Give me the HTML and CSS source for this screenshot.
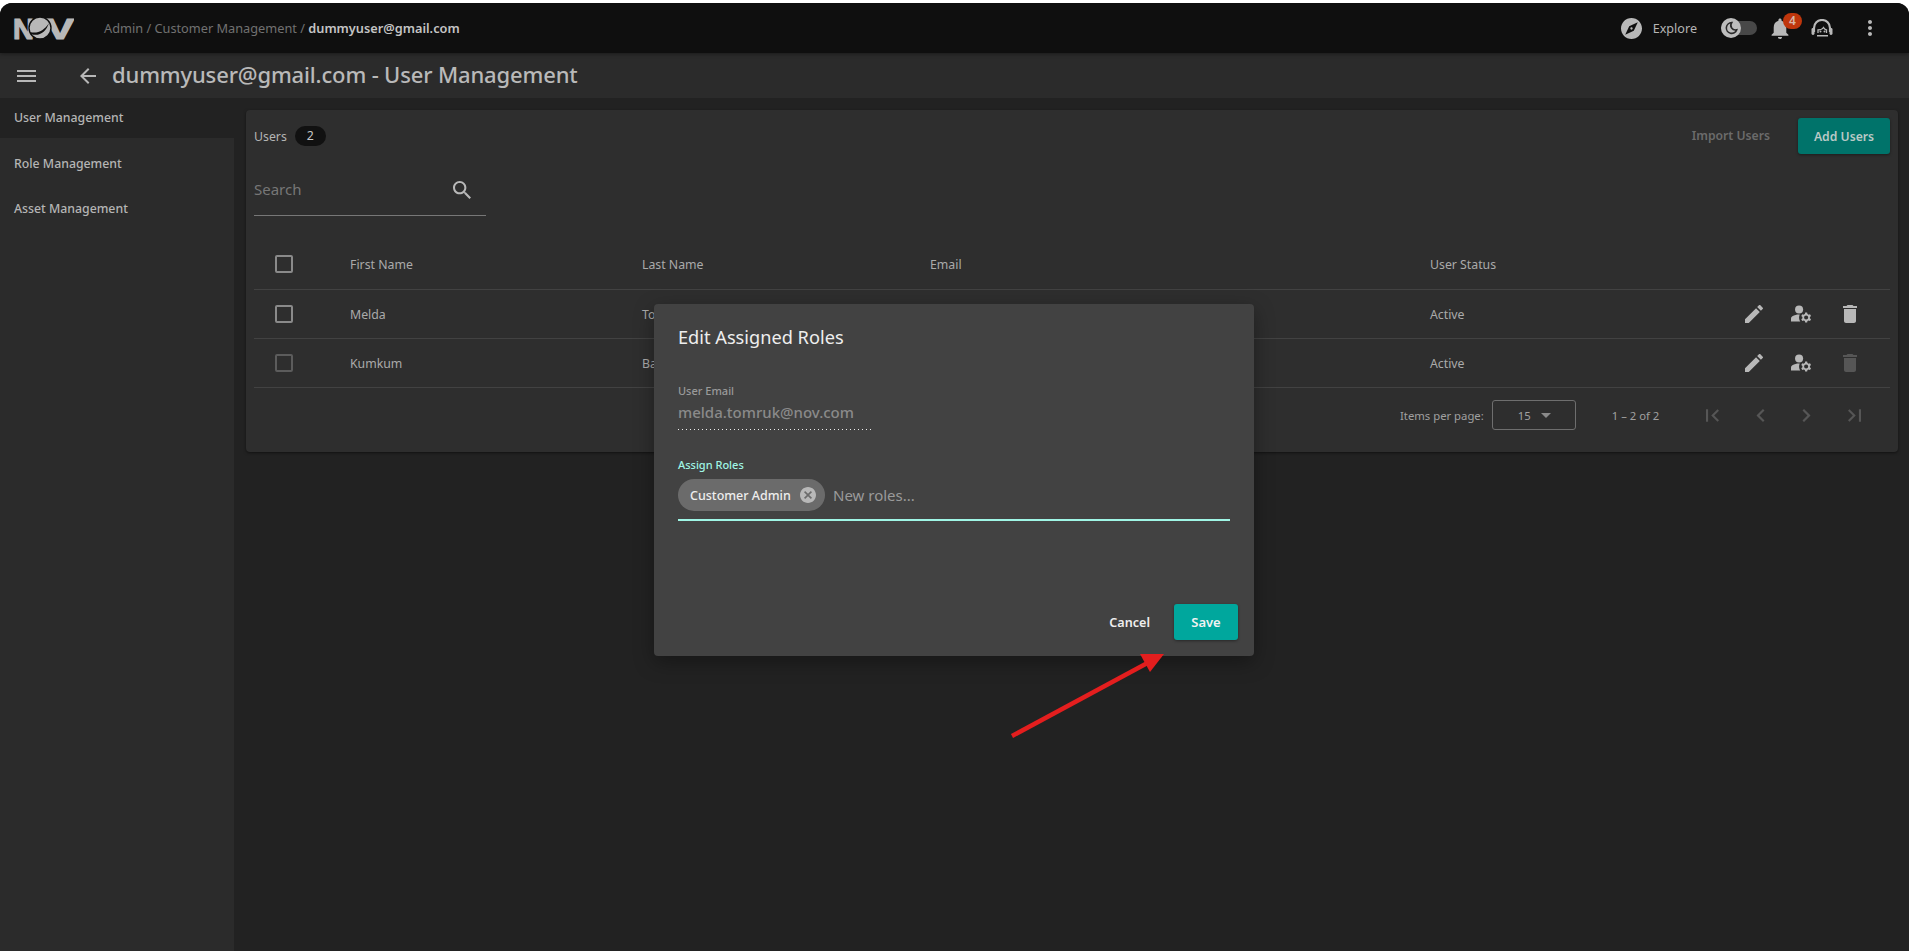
FILE: index.html
```html
<!DOCTYPE html>
<html lang="en">
<head>
  <meta charset="UTF-8" />
  <meta name="viewport" content="width=device-width, initial-scale=1.0"/>
  <title>User Management</title>
  <link rel="stylesheet" href="styles.css">
</head>
<body>
  <div class="app">
    <!-- Top bar -->
    <header class="topbar">
      <svg class="logo" viewBox="0 0 61 36">
        <text class="logo-letter" x="0" y="28.5" textLength="21" lengthAdjust="spacingAndGlyphs">N</text>
        <text class="logo-letter" x="33" y="28.5" textLength="28" lengthAdjust="spacingAndGlyphs">V</text>
        <circle cx="27" cy="18" r="11" fill="#b8b8b8" stroke="#0f0f0f" stroke-width="1.4"/>
        <path d="M17 22c7 2 14-1 19-9-3 9-10 14-18 11z" fill="#0f0f0f"/>
      </svg>
      <div class="crumbs">Admin / Customer Management / <strong>dummyuser@gmail.com</strong></div>
      <div class="top-actions">
        <svg class="ico explore-ico" viewBox="2 2 20 20"><path d="M12 10.9c-.61 0-1.1.49-1.1 1.1s.49 1.1 1.1 1.1c.61 0 1.1-.49 1.1-1.1s-.49-1.1-1.1-1.1zM12 2C6.48 2 2 6.48 2 12s4.48 10 10 10 10-4.48 10-10S17.52 2 12 2zm2.19 12.19L6 18l3.81-8.19L18 6l-3.81 8.19z"/></svg>
        <span class="explore">Explore</span>
        <div class="toggle">
          <div class="knob">
            <svg viewBox="0 0 24 24"><path d="M13 4a8 8 0 1 0 7.5 10.8A7 7 0 0 1 13 4z" fill="none" stroke="#2b2b2b" stroke-width="2.4"/></svg>
          </div>
        </div>
        <div class="bell">
          <svg class="ico" viewBox="4 2 16 20"><path d="M12 22c1.1 0 2-.9 2-2h-4c0 1.1.89 2 2 2zm6-6v-5c0-3.07-1.64-5.64-4.5-6.32V4c0-.83-.67-1.5-1.5-1.5s-1.5.67-1.5 1.5v.68C7.63 5.36 6 7.92 6 11v5l-2 2v1h16v-1l-2-2z"/></svg>
          <span class="bell-count">4</span>
        </div>
        <svg class="support" viewBox="0 0 22 18" fill="none" stroke="#b8b8b8">
          <path d="M3 13V9a8 8 0 0 1 16 0v4" stroke-width="2.2"/>
          <path d="M7 14V11c2.5 0 4.5-1 5.5-2.5 1 1.5 1.5 2.5 3 2.5v3" stroke-width="1.3"/>
          <path d="M6 16.8h11" stroke-width="1.6"/>
          <circle cx="9.5" cy="12.5" r="1" fill="#b8b8b8" stroke="none"/>
          <circle cx="13.5" cy="12.5" r="1" fill="#b8b8b8" stroke="none"/>
          <rect x="0.5" y="9" width="3" height="7" rx="1.4" fill="#b8b8b8" stroke="none"/>
          <rect x="18.5" y="9" width="3" height="7" rx="1.4" fill="#b8b8b8" stroke="none"/>
        </svg>
        <svg class="ico kebab" viewBox="0 0 24 24"><path d="M12 8c1.1 0 2-.9 2-2s-.9-2-2-2-2 .9-2 2 .9 2 2 2zm0 2c-1.1 0-2 .9-2 2s.9 2 2 2 2-.9 2-2-.9-2-2-2zm0 6c-1.1 0-2 .9-2 2s.9 2 2 2 2-.9 2-2-.9-2-2-2z"/></svg>
      </div>
    </header>

    <!-- Page title -->
    <div class="titlebar">
      <svg class="ico menu-ico" viewBox="3 6 18 12" preserveAspectRatio="none"><path d="M3 18h18v-2H3v2zm0-5h18v-2H3v2zm0-7v2h18V6H3z"/></svg>
      <svg class="ico back-ico" viewBox="4 4 16 16"><path d="M20 11H7.83l5.59-5.59L12 4l-8 8 8 8 1.41-1.41L7.83 13H20v-2z"/></svg>
      <h1>dummyuser@gmail.com - User Management</h1>
    </div>

    <div class="body-row">
      <nav class="sidebar">
        <a class="nav-item active">User Management</a>
        <a class="nav-item">Role Management</a>
        <a class="nav-item">Asset Management</a>
      </nav>

      <main class="content">
        <section class="card">
          <div class="card-head">
            <span class="users-label">Users</span>
            <span class="count">2</span>
            <span class="import">Import Users</span>
            <button class="btn-add">Add Users</button>
          </div>

          <div class="search">
            <span>Search</span>
            <svg class="ico" viewBox="3 3 17.5 17.5"><path d="M15.5 14h-.79l-.28-.27C15.41 12.59 16 11.11 16 9.5 16 5.91 13.09 3 9.5 3S3 5.91 3 9.5 5.91 16 9.5 16c1.61 0 3.09-.59 4.23-1.57l.27.28v.79l5 4.99L20.49 19l-4.99-5zm-6 0C7.01 14 5 11.99 5 9.5S7.01 5 9.5 5 14 7.01 14 9.5 11.99 14 9.5 14z"/></svg>
          </div>

          <div class="row row-head">
            <span class="check"></span>
            <span>First Name</span>
            <span>Last Name</span>
            <span>Email</span>
            <span>User Status</span>
            <span></span>
          </div>
          <div class="row">
            <span class="check"></span>
            <span>Melda</span>
            <span>Tomruk</span>
            <span>melda.tomruk@nov.com</span>
            <span>Active</span>
            <span class="row-actions">
              <svg class="ico act-edit" viewBox="3 3 18 18"><path d="M3 17.25V21h3.75L17.81 9.94l-3.75-3.75L3 17.25zM20.71 7.04c.39-.39.39-1.02 0-1.41l-2.34-2.34c-.39-.39-1.02-.39-1.41 0l-1.83 1.83 3.75 3.75 1.83-1.83z"/></svg>
              <svg class="ico act-user" viewBox="2 4 20.8 17"><circle cx="10" cy="8" r="4"/><path d="M10.67 13.02C10.45 13.01 10.23 13 10 13c-2.42 0-4.68.67-6.61 1.82C2.51 15.34 2 16.32 2 17.35V20h9.26c-.79-1.13-1.26-2.51-1.26-4 0-1.07.25-2.07.67-2.98z"/><path d="M20.75 16c0-.22-.03-.42-.06-.63l1.14-1.01-1-1.73-1.45.49c-.32-.27-.68-.48-1.08-.63L18 11h-2l-.3 1.49c-.4.15-.76.36-1.08.63l-1.45-.49-1 1.73 1.14 1.01c-.03.21-.06.41-.06.63s.03.42.06.63l-1.14 1.01 1 1.73 1.45-.49c.32.27.68.48 1.08.63L16 21h2l.3-1.49c.4-.15.76-.36 1.08-.63l1.45.49 1-1.73-1.14-1.01c.03-.21.06-.41.06-.63zM17 18c-1.1 0-2-.9-2-2s.9-2 2-2 2 .9 2 2-.9 2-2 2z"/></svg>
              <svg class="ico act-trash" viewBox="5 3 14 18"><path d="M6 19c0 1.1.9 2 2 2h8c1.1 0 2-.9 2-2V7H6v12zM19 4h-3.5l-1-1h-5l-1 1H5v2h14V4z"/></svg>
            </span>
          </div>
          <div class="row">
            <span class="check dim"></span>
            <span>Kumkum</span>
            <span>Bansal</span>
            <span>kumkum.bansal@nov.com</span>
            <span>Active</span>
            <span class="row-actions">
              <svg class="ico act-edit" viewBox="3 3 18 18"><path d="M3 17.25V21h3.75L17.81 9.94l-3.75-3.75L3 17.25zM20.71 7.04c.39-.39.39-1.02 0-1.41l-2.34-2.34c-.39-.39-1.02-.39-1.41 0l-1.83 1.83 3.75 3.75 1.83-1.83z"/></svg>
              <svg class="ico act-user" viewBox="2 4 20.8 17"><circle cx="10" cy="8" r="4"/><path d="M10.67 13.02C10.45 13.01 10.23 13 10 13c-2.42 0-4.68.67-6.61 1.82C2.51 15.34 2 16.32 2 17.35V20h9.26c-.79-1.13-1.26-2.51-1.26-4 0-1.07.25-2.07.67-2.98z"/><path d="M20.75 16c0-.22-.03-.42-.06-.63l1.14-1.01-1-1.73-1.45.49c-.32-.27-.68-.48-1.08-.63L18 11h-2l-.3 1.49c-.4.15-.76.36-1.08.63l-1.45-.49-1 1.73 1.14 1.01c-.03.21-.06.41-.06.63s.03.42.06.63l-1.14 1.01 1 1.73 1.45-.49c.32.27.68.48 1.08.63L16 21h2l.3-1.49c.4-.15.76-.36 1.08-.63l1.45.49 1-1.73-1.14-1.01c.03-.21.06-.41.06-.63zM17 18c-1.1 0-2-.9-2-2s.9-2 2-2 2 .9 2 2-.9 2-2 2z"/></svg>
              <svg class="ico act-trash ico-off" viewBox="5 3 14 18"><path d="M6 19c0 1.1.9 2 2 2h8c1.1 0 2-.9 2-2V7H6v12zM19 4h-3.5l-1-1h-5l-1 1H5v2h14V4z"/></svg>
            </span>
          </div>

          <div class="pager">
            <span class="per-page">Items per page:</span>
            <div class="page-select"><span>15</span><i class="caret"></i></div>
            <span class="range">1 – 2 of 2</span>
            <div class="pager-btns">
              <svg class="ico pg-wide" viewBox="6 6 12.41 12"><path d="M18.41 16.59L13.82 12l4.59-4.59L17 6l-6 6 6 6zM6 6h2v12H6z"/></svg>
              <svg class="ico pg-thin" viewBox="8 6 7.41 12"><path d="M15.41 7.41L14 6l-6 6 6 6 1.41-1.41L10.83 12z"/></svg>
              <svg class="ico pg-thin" viewBox="8.59 6 7.41 12"><path d="M10 6L8.59 7.41 13.17 12l-4.58 4.58L10 18l6-6z"/></svg>
              <svg class="ico pg-wide" viewBox="5.59 6 12.41 12"><path d="M5.59 7.41L10.18 12l-4.59 4.59L7 18l6-6-6-6zM16 6h2v12h-2z"/></svg>
            </div>
          </div>
        </section>
      </main>
    </div>

    <!-- Dialog -->
    <div class="dialog">
      <h2>Edit Assigned Roles</h2>
      <label class="field-label">User Email</label>
      <div class="readonly">melda.tomruk@nov.com</div>
      <label class="field-label focus">Assign Roles</label>
      <div class="chips">
        <span class="chip">Customer Admin
          <svg viewBox="2 2 20 20"><path d="M12 2C6.47 2 2 6.47 2 12s4.47 10 10 10 10-4.47 10-10S17.53 2 12 2zm5 13.59L15.59 17 12 13.41 8.41 17 7 15.59 10.59 12 7 8.41 8.41 7 12 10.59 15.59 7 17 8.41 13.41 12 17 15.59z"/></svg>
        </span>
        <span class="placeholder">New roles...</span>
      </div>
      <div class="dialog-actions">
        <button class="btn-cancel">Cancel</button>
        <button class="btn-save">Save</button>
      </div>
    </div>

    <!-- Annotation arrow -->
    <svg class="arrow" viewBox="0 0 170 100">
      <path d="M4 84L145 8" stroke="#e41e1e" stroke-width="4.5"/>
      <path d="M156 2L132 2L142 20z" fill="#e41e1e"/>
    </svg>
  </div>
</body>
</html>
```

FILE: styles.css
```css
* { box-sizing: border-box; margin: 0; padding: 0; }

body {
  background: #fff;
  font-family: "Noto Sans", "Open Sans", sans-serif;
  font-size: 12.3px;
  color: #b5b5b5;
  height: 951px;
  overflow: hidden;
  padding-top: 3px;
}

.app {
  position: relative;
  height: 948px;
  display: flex;
  flex-direction: column;
  background: #222;
  border-radius: 12px 12px 0 0;
  overflow: hidden;
}

.ico { fill: #b8b8b8; display: block; }

/* top bar */
.topbar {
  height: 50px;
  flex: none;
  display: flex;
  align-items: center;
  background: #0f0f0f;
  padding-left: 13px;
  box-shadow: 0 1px 4px rgba(0, 0, 0, 0.4);
  position: relative;
  z-index: 1;
}

.logo { width: 61px; height: 36px; }
.logo-letter {
  font-family: "Liberation Sans", sans-serif;
  font-weight: 700;
  font-size: 29px;
  fill: #b8b8b8;
  stroke: #b8b8b8;
  stroke-width: 1.2px;
}

.crumbs { margin-left: 30px; color: #717171; font-size: 12.75px; }
.crumbs strong { color: #c4c4c4; font-weight: 600; }

.top-actions {
  margin-left: auto;
  display: flex;
  align-items: center;
  padding-right: 27px;
  font-size: 12.6px;
}

.explore-ico { width: 21px; height: 21px; }
.explore { margin-left: 11px; color: #b5b5b5; }

.toggle {
  margin-left: 24px;
  width: 36px;
  height: 14px;
  border-radius: 7px;
  background: #484848;
  display: flex;
  align-items: center;
}
.knob {
  width: 20px;
  height: 20px;
  border-radius: 50%;
  background: #bdbdbd;
  padding: 2px;
}
.knob svg { display: block; }

.bell { position: relative; margin-left: 14px; }
.bell .ico { width: 18px; height: 21px; }
.bell-count {
  position: absolute;
  top: -5px;
  left: 12px;
  width: 19px;
  height: 16px;
  border-radius: 8px;
  background: #bf360c;
  color: #d9b5a8;
  font-size: 12px;
  font-weight: 600;
  line-height: 16px;
  text-align: center;
}

.support { margin-left: 22px; width: 22px; height: 18px; }
.kebab { margin-left: 25px; width: 24px; height: 24px; }

/* title bar */
.titlebar {
  height: 45px;
  flex: none;
  display: flex;
  align-items: center;
  background: #2b2b2b;
  padding-left: 17px;
}
.menu-ico { width: 19px; height: 12px; }
.back-ico { margin-left: 44px; width: 16px; height: 16px; }
.titlebar h1 {
  margin-left: 16px;
  margin-bottom: 3px;
  font-size: 22px;
  font-weight: 500;
  letter-spacing: -0.15px;
  color: #b9b9b9;
}

/* sidebar */
.body-row { flex: 1; display: flex; min-height: 0; }

.sidebar {
  width: 234px;
  flex: none;
  background: #2b2b2b;
}
.nav-item {
  display: flex;
  align-items: center;
  height: 45px;
  padding: 0 14px 4px;
  color: #b5b5b5;
  font-size: 12.3px;
  font-weight: 500;
}
.nav-item.active { height: 40px; background: #222; margin-bottom: 5px; padding-bottom: 1px; }

/* card */
.content { flex: 1; padding: 12px 11px 0 12px; }

.card {
  height: 342px;
  background: #2e2e2e;
  border-radius: 4px;
  box-shadow: 0 1px 3px rgba(0, 0, 0, 0.5);
  padding: 8px 8px 0;
}

.card-head {
  display: flex;
  align-items: center;
  height: 36px;
}
.users-label { color: #b5b5b5; }
.count {
  margin-left: 8px;
  width: 31px;
  height: 20px;
  border-radius: 10px;
  background: #111;
  color: #c8c8c8;
  line-height: 20px;
  text-align: center;
}
.import { margin-left: auto; margin-bottom: 2px; color: #6b6b6b; font-size: 12.2px; font-weight: 600; }
.btn-add {
  margin-left: 28px;
  width: 92px;
  height: 36px;
  border: none;
  border-radius: 3px;
  background: #00736a;
  color: #b9c9c6;
  font: 600 12.2px "Noto Sans", sans-serif;
  box-shadow: 0 1px 3px rgba(0, 0, 0, 0.4);
}

.search {
  margin: 18px 0 0;
  width: 232px;
  height: 44px;
  padding: 7px 15px 0 0;
  border-bottom: 1px solid #777;
  display: flex;
  justify-content: space-between;
  align-items: flex-start;
  color: #777;
  font-size: 15px;
}
.search .ico { width: 18px; height: 18px; margin-top: 2px; }

.row {
  display: grid;
  grid-template-columns: 75px 292px 288px 500px 1fr 145px;
  align-items: center;
  height: 49px;
  padding-left: 21px;
  border-bottom: 1px solid #424242;
  color: #aaa;
}
.row-head { margin-top: 25px; padding-bottom: 2px; }

.check {
  width: 18px;
  height: 18px;
  border: 2px solid #8a8a8a;
  border-radius: 2px;
}
.check.dim { border-color: #5c5c5c; }

.row-actions { display: flex; align-items: center; gap: 28px; }
.row-actions .ico { height: 18px; }
.row-actions .act-edit { width: 18px; }
.row-actions .act-user { width: 21px; }
.row-actions .act-trash { width: 16px; margin-left: 2px; }
.row-actions .ico-off { fill: #565656; }

.pager {
  display: flex;
  align-items: center;
  height: 54px;
  padding-left: 1146px;
  font-size: 11.3px;
  color: #a0a0a0;
}
.page-select {
  margin-left: 8px;
  width: 84px;
  height: 30px;
  border: 1px solid #6e6e6e;
  border-radius: 3px;
  padding-left: 25px;
  display: flex;
  align-items: center;
  gap: 10px;
}
.caret {
  border-left: 5px solid transparent;
  border-right: 5px solid transparent;
  border-top: 5px solid #8a8a8a;
}
.range { margin-left: 36px; }
.pager-btns { margin-left: 47px; display: flex; align-items: center; gap: 37px; }
.pager-btns .ico { height: 13px; fill: #565656; }
.pager-btns .pg-wide { width: 13px; }
.pager-btns .pg-thin { width: 9px; }

/* dialog */
.dialog {
  position: absolute;
  left: 654px;
  top: 301px;
  width: 600px;
  height: 352px;
  background: #424242;
  border-radius: 4px;
  box-shadow: 0 6px 20px rgba(0, 0, 0, 0.35);
  padding: 20px 24px;
  display: flex;
  flex-direction: column;
  align-items: flex-start;
}
.dialog h2 { font-size: 18.2px; font-weight: 400; color: #eee; line-height: 26px; }

.field-label { margin-top: 33px; font-size: 11px; color: #9a9a9a; line-height: 16px; font-weight: 500; }
.readonly {
  width: 193px;
  height: 31px;
  padding-bottom: 1px;
  background: repeating-linear-gradient(to right, #eee 0, #eee 1px, transparent 1px, transparent 4px) left bottom / 100% 1px no-repeat;
  color: #8a8a8a;
  font-size: 15px;
  font-weight: 500;
  line-height: 26px;
}
.field-label.focus { margin-top: 27px; color: #9ff5e5; }

.chips {
  margin-top: 6px;
  width: 552px;
  height: 42px;
  border-bottom: 2px solid #9ff5e5;
  display: flex;
  align-items: flex-start;
  gap: 8px;
}
.chip {
  width: 147px;
  height: 32px;
  border-radius: 16px;
  background: #6b6b6b;
  color: #eee;
  font-size: 12.5px;
  font-weight: 500;
  padding-left: 12px;
  display: flex;
  align-items: center;
  justify-content: space-between;
  padding-right: 9px;
}
.chip svg { width: 16px; height: 16px; fill: #b8b8b8; }
.placeholder { color: #9a9a9a; font-size: 15px; line-height: 32px; }

.dialog-actions {
  margin-top: auto;
  margin-bottom: -4px;
  align-self: stretch;
  margin-right: -8px;
  display: flex;
  justify-content: flex-end;
  align-items: center;
  gap: 24px;
}
.btn-cancel {
  background: none;
  border: none;
  color: #eee;
  font: 600 12.6px "Noto Sans", sans-serif;
}
.btn-save {
  width: 64px;
  height: 36px;
  border: none;
  border-radius: 3px;
  background: #00a79d;
  color: #f2f2f2;
  font: 600 13px "Noto Sans", sans-serif;
  box-shadow: 0 1px 3px rgba(0, 0, 0, 0.4);
}

.arrow {
  position: absolute;
  left: 1008px;
  top: 649px;
  width: 170px;
  height: 100px;
}
```
